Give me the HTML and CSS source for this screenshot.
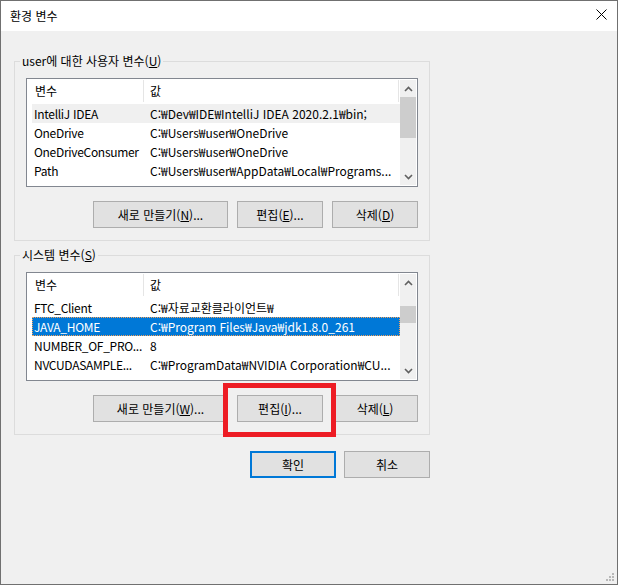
FILE: index.html
```html
<!DOCTYPE html>
<html lang="ko">
<head>
    <meta charset="UTF-8">
    <title>환경 변수</title>
    <link rel="stylesheet" href="styles.css">
</head>
<body>
    <div class="window">
        <div class="titlebar">
            <span class="title">환경 변수</span>
            <svg class="close" width="11" height="11" viewBox="0 0 11 11">
                <path d="M0.5 0.5 L10.5 10.5 M10.5 0.5 L0.5 10.5" stroke="#000" stroke-width="1" fill="none"/>
            </svg>
        </div>

        <div class="content">
            <fieldset class="group">
                <legend>user에 대한 사용자 변수(<u>U</u>)</legend>
                <div class="list">
                    <div class="list-body">
                        <div class="list-head">
                            <span class="head-name">변수</span>
                            <span class="head-value">값</span>
                        </div>
                        <div class="row row-inactive">
                            <span class="cell-name">IntelliJ IDEA</span>
                            <span class="cell-value">C:₩Dev₩IDE₩IntelliJ IDEA 2020.2.1₩bin;</span>
                        </div>
                        <div class="row">
                            <span class="cell-name">OneDrive</span>
                            <span class="cell-value">C:₩Users₩user₩OneDrive</span>
                        </div>
                        <div class="row">
                            <span class="cell-name">OneDriveConsumer</span>
                            <span class="cell-value">C:₩Users₩user₩OneDrive</span>
                        </div>
                        <div class="row">
                            <span class="cell-name">Path</span>
                            <span class="cell-value">C:₩Users₩user₩AppData₩Local₩Programs...</span>
                        </div>
                    </div>
                    <div class="scrollbar">
                        <div class="sb-btn">
                            <svg width="9" height="6" viewBox="0 0 9 6"><path d="M1 5 L4.5 1.5 L8 5" stroke="#606060" stroke-width="1.6" fill="none"/></svg>
                        </div>
                        <div class="sb-track">
                            <div class="sb-thumb" style="margin-top: 0; height: 41px;"></div>
                        </div>
                        <div class="sb-btn">
                            <svg width="9" height="6" viewBox="0 0 9 6"><path d="M1 1 L4.5 4.5 L8 1" stroke="#606060" stroke-width="1.6" fill="none"/></svg>
                        </div>
                    </div>
                </div>
                <div class="btn-row">
                    <button class="btn btn-wide">새로 만들기(<u>N</u>)...</button>
                    <button class="btn">편집(<u>E</u>)...</button>
                    <button class="btn">삭제(<u>D</u>)</button>
                </div>
            </fieldset>

            <fieldset class="group group-system">
                <legend>시스템 변수(<u>S</u>)</legend>
                <div class="list">
                    <div class="list-body">
                        <div class="list-head">
                            <span class="head-name">변수</span>
                            <span class="head-value">값</span>
                        </div>
                        <div class="row">
                            <span class="cell-name">FTC_Client</span>
                            <span class="cell-value">C:₩자료교환클라이언트₩</span>
                        </div>
                        <div class="row row-selected">
                            <span class="cell-name">JAVA_HOME</span>
                            <span class="cell-value">C:₩Program Files₩Java₩jdk1.8.0_261</span>
                        </div>
                        <div class="row">
                            <span class="cell-name">NUMBER_OF_PRO...</span>
                            <span class="cell-value">8</span>
                        </div>
                        <div class="row">
                            <span class="cell-name">NVCUDASAMPLE...</span>
                            <span class="cell-value">C:₩ProgramData₩NVIDIA Corporation₩CU...</span>
                        </div>
                    </div>
                    <div class="scrollbar">
                        <div class="sb-btn">
                            <svg width="9" height="6" viewBox="0 0 9 6"><path d="M1 5 L4.5 1.5 L8 5" stroke="#606060" stroke-width="1.6" fill="none"/></svg>
                        </div>
                        <div class="sb-track">
                            <div class="sb-thumb" style="margin-top: 15px; height: 17px;"></div>
                        </div>
                        <div class="sb-btn">
                            <svg width="9" height="6" viewBox="0 0 9 6"><path d="M1 1 L4.5 4.5 L8 1" stroke="#606060" stroke-width="1.6" fill="none"/></svg>
                        </div>
                    </div>
                </div>
                <div class="btn-row">
                    <button class="btn btn-wide">새로 만들기(<u>W</u>)...</button>
                    <button class="btn">편집(<u>I</u>)...</button>
                    <button class="btn">삭제(<u>L</u>)</button>
                </div>
            </fieldset>

            <div class="dialog-actions">
                <button class="btn btn-default">확인</button>
                <button class="btn">취소</button>
            </div>
        </div>

        <div class="highlight-box"></div>

        <svg class="grip" width="10" height="10" viewBox="0 0 10 10">
            <rect x="7" y="1" width="2" height="2" fill="#b8b8b8"/>
            <rect x="4" y="4" width="2" height="2" fill="#b8b8b8"/>
            <rect x="7" y="4" width="2" height="2" fill="#b8b8b8"/>
            <rect x="1" y="7" width="2" height="2" fill="#b8b8b8"/>
            <rect x="4" y="7" width="2" height="2" fill="#b8b8b8"/>
            <rect x="7" y="7" width="2" height="2" fill="#b8b8b8"/>
        </svg>
    </div>
</body>
</html>
```

FILE: styles.css
```css
* {
    box-sizing: border-box;
}

body {
    margin: 0;
    font-family: "Noto Sans CJK KR", "Noto Sans", sans-serif;
    font-size: 12px;
    color: #000;
}

.window {
    position: relative;
    width: 618px;
    height: 585px;
    border: 1px solid #707070;
    background: #f0f0f0;
}

.titlebar {
    height: 30px;
    background: #fff;
    display: flex;
    align-items: center;
    justify-content: space-between;
    padding: 0 10px 1px 9px;
}

.title {
    line-height: 16px;
}

.close {
    display: block;
    margin-top: -2px;
}

.content {
    padding: 22px 0 0 13px;
}

.group {
    width: 416px;
    margin: 0;
    padding: 9px 11px 12px;
    border: 1px solid #dcdcdc;
}

.group legend {
    padding: 0 2px;
    margin-left: -6px;
    line-height: 16px;
}

.group-system {
    margin-top: 6px;
}

u {
    text-decoration: underline;
    text-underline-offset: 1px;
}

/* list view */
.list {
    width: 392px;
    height: 109px;
    border: 1px solid #828790;
    background: #fff;
    padding: 1px;
    display: flex;
}

.list-body {
    width: 372px;
    overflow: hidden;
}

.list-head {
    display: flex;
    height: 24px;
    line-height: 22px;
}

.head-name {
    width: 116px;
    padding-left: 7px;
    border-right: 1px solid #e5e5e5;
    margin-bottom: 2px;
}

.head-value {
    width: 255px;
    padding-left: 6px;
    border-right: 1px solid #e5e5e5;
    margin-bottom: 2px;
}

.row {
    display: flex;
    height: 19px;
    line-height: 17px;
    margin-left: 4px;
    border: 1px solid transparent;
    white-space: nowrap;
}

.cell-name {
    width: 111px;
    padding-left: 1px;
    letter-spacing: -0.3px;
}

.cell-value {
    flex: 1;
    padding-left: 6px;
}

.row-inactive {
    background: #f0f0f0;
    border-color: #f0f0f0;
}

.row-selected {
    background: #0078d7;
    color: #fff;
    border: 1px dotted #f5a25a;
}

/* scrollbar */
.scrollbar {
    width: 16px;
    display: flex;
    flex-direction: column;
    background: #f0f0f0;
}

.sb-btn {
    height: 17px;
    display: flex;
    align-items: center;
    justify-content: center;
}

.sb-track {
    flex: 1;
}

.sb-thumb {
    background: #cdcdcd;
}

/* buttons */
.btn-row {
    display: flex;
    justify-content: flex-end;
    gap: 9px;
    margin-top: 14px;
}

.btn {
    width: 86px;
    height: 27px;
    padding: 0;
    border: 1px solid #adadad;
    background: #e1e1e1;
    font-family: inherit;
    font-size: 12px;
    color: #000;
    line-height: 16px;
}

.btn-wide {
    width: 135px;
}

.btn-default {
    border: 2px solid #0078d7;
}

.dialog-actions {
    width: 416px;
    display: flex;
    justify-content: flex-end;
    gap: 8px;
    margin-top: 16px;
}

/* annotation */
.highlight-box {
    position: absolute;
    left: 222px;
    top: 382px;
    width: 113px;
    height: 54px;
    border: 5px solid #ed1c24;
}

.grip {
    position: absolute;
    right: 2px;
    bottom: 2px;
}
```
